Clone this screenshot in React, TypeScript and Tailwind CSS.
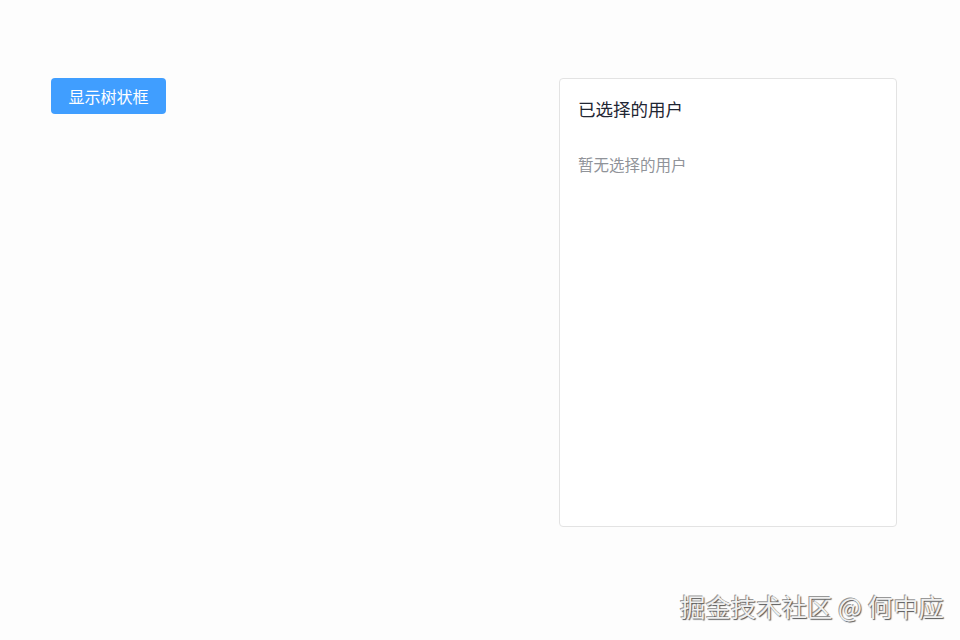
const FONT = '"Noto Sans CJK SC", "Noto Sans", sans-serif';

export default function App() {
  return (
    <div
      className="relative flex h-[640px] w-[960px] items-start bg-[#fdfdfd] pl-[51px] pt-[78px]"
      style={{ fontFamily: FONT }}
    >
      <button className="flex h-[36px] w-[115px] items-center justify-center rounded-[4px] bg-[#409eff] text-[16px] text-white">
        显示树状框
      </button>

      <div className="ml-[393px] flex h-[449px] w-[338px] flex-col rounded-[4px] border border-[#e3e3e3] bg-white px-[18px] pt-[17px]">
        <h3 className="text-[17.5px] leading-[26px] font-normal text-[#1f2633]">已选择的用户</h3>
        <p className="mt-[32px] text-[15.5px] leading-[20px] text-[#909399]">暂无选择的用户</p>
      </div>

      <div
        className="absolute right-[16px] bottom-[19px] text-[25.4px] leading-[30px] text-[#f0f0f0]"
        style={{ textShadow: '1px 1px 1px #555, -1px -1px 0 #999' }}
      >
        掘金技术社区 @ 何中应
      </div>
    </div>
  );
}
